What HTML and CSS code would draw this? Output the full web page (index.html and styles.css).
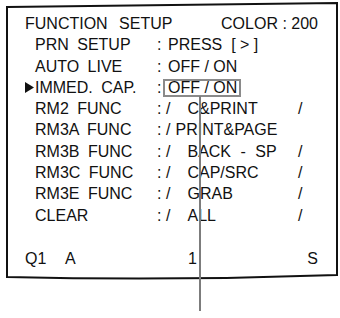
FILE: index.html
```html
<!DOCTYPE html>
<html>
<head>
<meta charset="utf-8">
<link rel="stylesheet" href="styles.css">
</head>
<body>
<div class="page">
  <svg class="overlay" width="340" height="318" viewBox="0 0 340 318">
    <path class="frame" d="M7,7 L337,3 L337,275 Q172,281 7,277 Z"/>
    <line class="pointer" x1="200" y1="96" x2="200" y2="311"/>
  </svg>
  <div class="screen">
    <div class="header">
      <span class="title">FUNCTION SETUP</span>
      <span>COLOR : 200</span>
    </div>
    <div class="menu">
      <span></span><span class="label">PRN SETUP</span><span>:</span><span class="val">PRESS&nbsp; [ &gt; ]</span><span></span>

      <span></span><span class="label">AUTO LIVE</span><span>:</span><span class="val">OFF / ON</span><span></span>

      <span class="marker"><svg width="9" height="11" viewBox="0 0 9 11"><path d="M0,0 L9,5.5 L0,11 Z" fill="#111"/></svg></span><span class="label">IMMED. CAP.</span><span>:</span><span class="valbox"><span class="boxed">OFF / ON</span></span><span></span>

      <span></span><span class="label">RM2 FUNC</span><span>:</span><span class="opt"><span class="sl">/</span><span class="far">C&amp;PRINT</span></span><span>/</span>

      <span></span><span class="label">RM3A FUNC</span><span>:</span><span class="opt"><span class="sl">/</span><span class="near">PRINT&amp;PAGE</span></span><span></span>

      <span></span><span class="label">RM3B FUNC</span><span>:</span><span class="opt"><span class="sl">/</span><span class="far spaced">BACK - SP</span></span><span>/</span>

      <span></span><span class="label">RM3C FUNC</span><span>:</span><span class="opt"><span class="sl">/</span><span class="far">CAP/SRC</span></span><span>/</span>

      <span></span><span class="label">RM3E FUNC</span><span>:</span><span class="opt"><span class="sl">/</span><span class="far">GRAB</span></span><span>/</span>

      <span></span><span class="label">CLEAR</span><span>:</span><span class="opt"><span class="sl">/</span><span class="far">ALL</span></span><span>/</span>
    </div>
    <div class="footer">
      <span>Q1</span><span>A</span><span>1</span><span class="end">S</span>
    </div>
  </div>
</div>
</body>
</html>
```
FILE: styles.css
```css
html, body {
  margin: 0;
  padding: 0;
  background: #ffffff;
}
.page {
  position: relative;
  width: 340px;
  height: 318px;
  overflow: hidden;
  font-family: "Liberation Sans", Arial, sans-serif;
  font-size: 16px;
  color: #111111;
}
.overlay {
  position: absolute;
  left: 0;
  top: 0;
  pointer-events: none;
}
.frame {
  fill: none;
  stroke: #111111;
  stroke-width: 2;
}
.pointer {
  stroke: #7c7c7c;
  stroke-width: 2;
}
.screen {
  padding: 13px 22px 0 25px;
  line-height: 21.3px;
}
.header {
  display: flex;
  justify-content: space-between;
}
.title {
  word-spacing: 7px;
}
.menu {
  display: grid;
  grid-template-columns: 10px 122px 6px 135px 1fr;
  grid-auto-rows: 21.3px;
  align-items: center;
}
.marker {
  display: flex;
  align-items: center;
  height: 21.3px;
}
.label {
  word-spacing: 4px;
}
.val {
  padding-left: 5px;
}
.valbox {
  display: flex;
  align-items: center;
}
.boxed {
  display: inline-block;
  border: 2px solid #8a8a8a;
  padding: 0 2px 0 3px;
  line-height: 14px;
}
.opt {
  display: flex;
}
.sl {
  margin-left: 3px;
}
.near {
  margin-left: 5px;
}
.far {
  margin-left: 17px;
}
.spaced {
  word-spacing: 5px;
}
.footer {
  display: grid;
  grid-template-columns: 40px 123px 1fr auto;
  margin-top: 22px;
}
.end {
  text-align: right;
}
```
